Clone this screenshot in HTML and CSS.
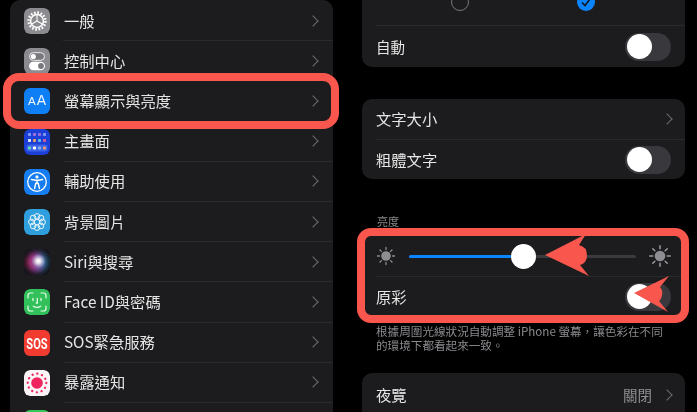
FILE: index.html
```html
<!DOCTYPE html>
<html lang="zh-Hant">
<head>
<meta charset="utf-8">
<title>螢幕顯示與亮度</title>
<link rel="stylesheet" href="styles.css">
</head>
<body>
<main class="page">
  <section class="list">
    <div class="row">
      <svg class="icon" viewBox="0 0 26 26"><rect width="26" height="26" rx="6" fill="#8b8b90"/><circle cx="13" cy="13" r="8.4" fill="none" stroke="#fff" stroke-width="2.6" stroke-dasharray="1.7 1.6"/><circle cx="13" cy="13" r="6.4" fill="none" stroke="#fff" stroke-width="1.5"/><path d="M13 13V7M13 13L7.8 16M13 13L18.2 16" stroke="#fff" stroke-width="1.1"/></svg>
      <div class="cell"><span class="label">一般</span><i class="chev"></i></div>
    </div>
    <div class="row">
      <svg class="icon" viewBox="0 0 26 26"><rect width="26" height="26" rx="6" fill="#8b8b90"/><rect x="5.5" y="4.7" width="15" height="7.6" rx="3.8" fill="#77777c" stroke="#eee" stroke-width="1"/><circle cx="9.3" cy="8.5" r="2.6" fill="#fff"/><rect x="5" y="13.8" width="16" height="8.4" rx="4.2" fill="#fff"/><circle cx="17" cy="18" r="2.9" fill="#77777c"/></svg>
      <div class="cell"><span class="label">控制中心</span><i class="chev"></i></div>
    </div>
    <div class="row">
      <div class="icon icon-text"><small class="icon-small">A</small>A</div>
      <div class="cell"><span class="label">螢幕顯示與亮度</span><i class="chev"></i></div>
    </div>
    <div class="row">
      <svg class="icon" viewBox="0 0 26 26"><rect width="26" height="26" rx="6" fill="#1c3fd8"/><g fill="#7d9bf2"><rect x="4" y="4" width="3" height="3" rx=".8"/><rect x="9" y="4" width="3" height="3" rx=".8" fill="#a46fd8"/><rect x="14" y="4" width="3" height="3" rx=".8" fill="#9a6ae0"/><rect x="19" y="4" width="3" height="3" rx=".8"/><rect x="4" y="10" width="3" height="3" rx=".8" fill="#dfe6ff"/><rect x="9" y="10" width="3" height="3" rx=".8" fill="#e0a060"/><rect x="14" y="10" width="3" height="3" rx=".8" fill="#58c0e8"/><rect x="19" y="10" width="3" height="3" rx=".8" fill="#d0609a"/></g><rect x="2.5" y="15.5" width="21" height="7" rx="2.5" fill="#3b63e8"/><rect x="4" y="17.5" width="3" height="3" rx=".8" fill="#62d8b0"/><rect x="9" y="17.5" width="3" height="3" rx=".8" fill="#fff"/><rect x="14" y="17.5" width="3" height="3" rx=".8" fill="#88b0f0"/><rect x="19" y="17.5" width="3" height="3" rx=".8" fill="#e89a70"/></svg>
      <div class="cell"><span class="label">主畫面</span><i class="chev"></i></div>
    </div>
    <div class="row">
      <svg class="icon" viewBox="0 0 26 26"><rect width="26" height="26" rx="6" fill="#167df0"/><circle cx="13" cy="13" r="9.3" fill="none" stroke="#fff" stroke-width="1.3"/><circle cx="13" cy="7.9" r="1.6" fill="#fff"/><path d="M7.4 10.4L11.6 11.2H14.4L18.6 10.4M13 11.5V14.6M11.8 14.2L10.6 19.4M14.2 14.2L15.4 19.4" fill="none" stroke="#fff" stroke-width="1.5" stroke-linecap="round"/></svg>
      <div class="cell"><span class="label">輔助使用</span><i class="chev"></i></div>
    </div>
    <div class="row">
      <svg class="icon" viewBox="0 0 26 26"><rect width="26" height="26" rx="6" fill="#2e9fdc"/><g fill="none" stroke="#e8f6fc" stroke-width="1"><circle cx="13" cy="13" r="2.9"/><circle cx="13" cy="7.5" r="2.9"/><circle cx="13" cy="18.5" r="2.9"/><circle cx="7.5" cy="13" r="2.9"/><circle cx="18.5" cy="13" r="2.9"/><circle cx="9.1" cy="9.1" r="2.9"/><circle cx="16.9" cy="9.1" r="2.9"/><circle cx="9.1" cy="16.9" r="2.9"/><circle cx="16.9" cy="16.9" r="2.9"/></g></svg>
      <div class="cell"><span class="label">背景圖片</span><i class="chev"></i></div>
    </div>
    <div class="row">
      <svg class="icon" viewBox="0 0 26 26"><defs><linearGradient id="sb" x1="0" x2="1"><stop offset="0" stop-color="#c0245f"/><stop offset=".45" stop-color="#84408f"/><stop offset="1" stop-color="#1f86b0"/></linearGradient><radialGradient id="sw" cx="56%" cy="46%" r="30%"><stop offset="0" stop-color="#fff"/><stop offset=".3" stop-color="#fff" stop-opacity=".85"/><stop offset="1" stop-color="#cfe4f0" stop-opacity="0"/></radialGradient><radialGradient id="sd" cx="50%" cy="50%" r="50%"><stop offset=".5" stop-color="#101216" stop-opacity="0"/><stop offset="1" stop-color="#101216" stop-opacity=".95"/></radialGradient></defs><rect width="26" height="26" rx="6" fill="#15151d"/><circle cx="13" cy="13" r="13" fill="url(#sb)"/><circle cx="13" cy="13" r="13" fill="url(#sd)"/><circle cx="13" cy="13" r="12" fill="url(#sw)"/></svg>
      <div class="cell"><span class="label">Siri與搜尋</span><i class="chev"></i></div>
    </div>
    <div class="row">
      <svg class="icon" viewBox="0 0 26 26"><rect width="26" height="26" rx="6" fill="#32c05a"/><path d="M4 9V6.5A2.5 2.5 0 0 1 6.500 4H9M17 4h2.500A2.500 2.500 0 0 1 22 6.500V9M22 17v2.500A2.500 2.500 0 0 1 19.500 22H17M9 22H6.500A2.500 2.500 0 0 1 4 19.500V17" fill="none" stroke="#e6fbe9" stroke-width="1.200" stroke-linecap="round"/><path d="M9 9.500v2M17 9.500v2M13.300 9.500v4.500h-1M9.300 17.200q3.700 2.200 7.400 0" fill="none" stroke="#e6fbe9" stroke-width="1.300" stroke-linecap="round"/></svg>
      <div class="cell"><span class="label">Face ID與密碼</span><i class="chev"></i></div>
    </div>
    <div class="row">
      <div class="icon icon-sos"><span class="sos-text">SOS</span></div>
      <div class="cell"><span class="label">SOS緊急服務</span><i class="chev"></i></div>
    </div>
    <div class="row">
      <svg class="icon" viewBox="0 0 26 26"><rect width="26" height="26" rx="6" fill="#fbf4f6"/><circle cx="13" cy="13" r="5.800" fill="#f0245e"/><circle cx="13" cy="13" r="9.300" fill="none" stroke="#f0245e" stroke-width="2.300" stroke-linecap="round" stroke-dasharray="0.100 4.770"/></svg>
      <div class="cell"><span class="label">暴露通知</span><i class="chev"></i></div>
    </div>
    <div class="row">
      <div class="icon icon-green"></div>
      <div class="cell"></div>
    </div>
  </section>

  <section class="settings">
    <div class="group">
      <div class="radios">
        <span class="radio"></span>
        <svg class="radio-on" viewBox="0 0 18 18"><circle cx="9" cy="9" r="9" fill="#0a84ff"/><path d="M5 9.500L8 12.500L13 6" fill="none" stroke="#101418" stroke-width="1.500"/></svg>
      </div>
      <div class="srow sep"><span class="label short">自動</span><span class="toggle"></span></div>
    </div>

    <div class="group gap">
      <div class="srow"><span class="label">文字大小</span><i class="chev"></i></div>
      <div class="srow sep"><span class="label">粗體文字</span><span class="toggle"></span></div>
    </div>

    <h2 class="heading">亮度</h2>
    <div class="group">
      <div class="srow slider-row">
        <svg class="sun small" viewBox="0 0 20 20"><circle cx="10" cy="10" r="4.800" fill="#8e8e92"/><path d="M10 1.500v2M10 16.500v2M1.500 10h2M16.500 10h2M4 4l1.400 1.400M14.600 14.600L16 16M4 16l1.400-1.400M14.600 5.400L16 4" stroke="#8e8e92" stroke-width="1.300" stroke-linecap="round"/></svg>
        <div class="track"><div class="fill"></div><div class="thumb"></div></div>
        <svg class="sun big" viewBox="0 0 22 22"><circle cx="11" cy="11" r="5.300" fill="#8e8e92"/><path d="M11 .8v3M11 18.200v3M.8 11h3M18.200 11h3M3.800 3.800l2 2M16.200 16.200l2 2M3.800 18.200l2-2M16.200 5.800l2-2" stroke="#9a9a9e" stroke-width="1.500" stroke-linecap="round"/></svg>
      </div>
      <div class="srow sep"><span class="label">原彩</span><span class="toggle"></span></div>
    </div>
    <p class="note">根據周圍光線狀況自動調整 iPhone 螢幕&#xFF0C;讓色彩在不同<br>的環境下都看起來一致。</p>

    <div class="group night">
      <div class="srow night-row"><span class="label">夜覽</span><span class="value">關閉</span><i class="chev"></i></div>
    </div>
  </section>

  <div class="mark mark-left"></div>
  <div class="mark mark-right"></div>
  <svg class="arrows" viewBox="0 0 697 412">
    <path d="M545 255L586 234L579 245Q587 247 587 255Q587 263 580 265L589 276Z"/>
    <path d="M634 293L669 276L660 287Q663 290 662 295Q661 300 659 301L668 312Z"/>
  </svg>
</main>
</body>
</html>
```
FILE: styles.css
```css
* { box-sizing: border-box; }
html, body { margin: 0; padding: 0; background: #000; }
body { width: 697px; height: 412px; overflow: hidden; }
.page {
  position: relative;
  display: flex;
  gap: 29px;
  width: 697px;
  height: 412px;
  padding-left: 10px;
  overflow: hidden;
  background: #000;
  color: #e6e6e6;
  font-family: "Noto Sans CJK TC", "Noto Sans", sans-serif;
  filter: blur(0.4px);
}
.list {
  flex: 0 0 323px;
  height: 430px;
  padding-top: 1px;
  background: #1c1c1e;
  border-radius: 10px 10px 0 0;
}
.row {
  display: flex;
  align-items: center;
  gap: 13px;
  height: 40.2px;
  padding-left: 14px;
}
.icon {
  display: flex;
  flex: 0 0 26px;
  align-items: center;
  justify-content: center;
  width: 26px;
  height: 26px;
  border-radius: 6px;
}
.icon-text {
  gap: 1px;
  align-items: baseline;
  padding-top: 4px;
  background: #0f7ff5;
  color: #f2f8ff;
  font-family: "Liberation Sans", sans-serif;
  font-size: 14px;
  line-height: 16px;
}
.icon-small { font-size: 11.500px; }
.icon-sos {
  background: #f13b30;
  color: #fff;
  font-family: "Roboto", sans-serif;
  font-size: 13.500px;
  font-weight: 700;
}
.sos-text { display: block; transform: scale(.82, 1.12); }
.icon-green { background: #34c759; }
.cell {
  display: flex;
  flex: 1;
  align-items: center;
  justify-content: space-between;
  align-self: stretch;
  padding-right: 16px;
  border-bottom: 1px solid #2a2a2c;
}
.label {
  padding-bottom: 2px;
  font-size: 15.300px;
  line-height: 20px;
  white-space: nowrap;
}
.cell .label { padding-left: 1px; }
.short { padding-bottom: 0; font-size: 14.500px; }
.chev {
  display: block;
  width: 8px;
  height: 8px;
  border-top: 1.700px solid #6c6c70;
  border-right: 1.700px solid #6c6c70;
  transform: rotate(45deg);
}
.settings {
  display: flex;
  flex: 0 0 323px;
  flex-direction: column;
  height: 430px;
}
.group {
  flex: none;
  background: #1c1c1e;
  border-radius: 10px;
}
.group:first-child { border-radius: 0 0 10px 10px; }
.gap { margin-top: 32px; }
.radios {
  display: flex;
  align-items: flex-end;
  gap: 108px;
  height: 25px;
  padding-left: 89px;
}
.radio {
  display: block;
  width: 18px;
  height: 18px;
  margin-bottom: 14px;
  border: 1px solid #77777b;
  border-radius: 50%;
}
.radio-on { display: block; width: 18px; height: 18px; margin-bottom: 14px; }
.srow {
  display: flex;
  align-items: center;
  justify-content: space-between;
  height: 40px;
  margin-left: 14px;
  padding-right: 14px;
}
.sep { border-top: 1px solid #29292b; }
.group:first-child .sep { height: 42px; }
.toggle {
  position: relative;
  display: block;
  width: 46px;
  height: 28px;
  border-radius: 14px;
  background: #39393d;
}
.toggle::after {
  content: "";
  position: absolute;
  top: 1.500px;
  left: 1.500px;
  width: 25px;
  height: 25px;
  border-radius: 50%;
  background: #fff;
}
.heading {
  margin: 35px 0 8px 15px;
  color: #8a8a8e;
  font-size: 11px;
  font-weight: 400;
  line-height: 14px;
}
.slider-row { gap: 13px; }
.sun { display: block; flex: none; }
.small { width: 20px; height: 20px; }
.big { width: 22px; height: 22px; }
.track {
  position: relative;
  flex: 1;
  height: 3px;
  border-radius: 2px;
  background: #3a3a3c;
}
.fill {
  width: 114px;
  height: 3px;
  border-radius: 2px;
  background: #0a84ff;
}
.thumb {
  position: absolute;
  top: -11px;
  left: 102px;
  width: 25px;
  height: 25px;
  border-radius: 50%;
  background: #fff;
}
.note {
  margin: 8px 0 0 14px;
  color: #8a8a8e;
  font-size: 11.600px;
  line-height: 14px;
  white-space: nowrap;
}
.night { height: 50px; margin-top: 21px; }
.night-row { height: 44px; }
.value { margin-left: auto; margin-right: 11px; padding-bottom: 2px; color: #8e8e93; font-size: 14.500px; }
.mark {
  position: absolute;
  border: 8px solid #f9574e;
}
.mark-left { left: 3px; top: 73px; width: 336px; height: 56px; border-radius: 16px; }
.mark-right { left: 357px; top: 228px; width: 332px; height: 95px; border-radius: 14px; }
.arrows { position: absolute; left: 0; top: 0; width: 697px; height: 412px; fill: #f9574e; pointer-events: none; }
```
